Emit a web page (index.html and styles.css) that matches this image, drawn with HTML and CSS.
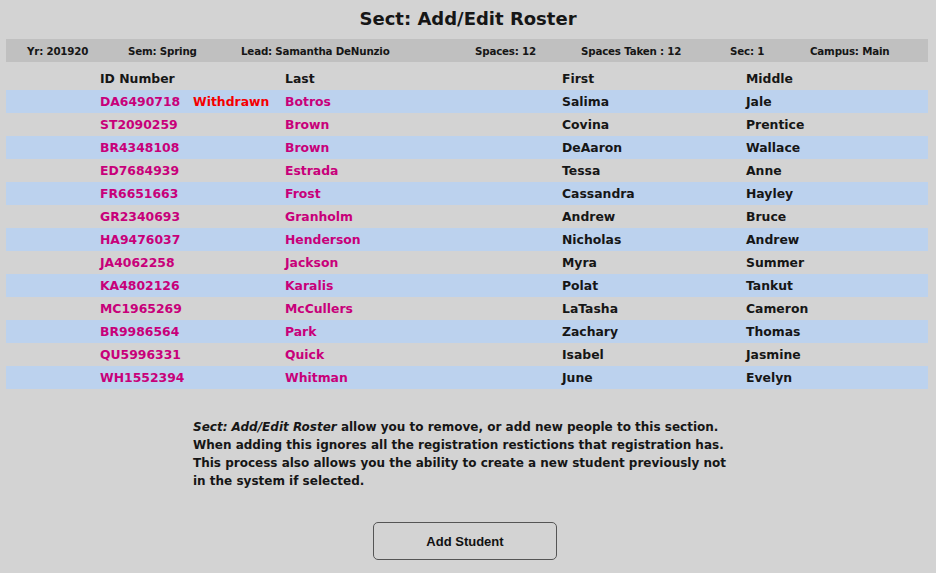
FILE: index.html
```html
<!DOCTYPE html>
<html>
<head>
<meta charset="utf-8">
<link rel="stylesheet" href="styles.css">
</head>
<body>
<div class="page">
  <h1 class="title">Sect: Add/Edit Roster</h1>
  <div class="infobar">
    <span>Yr: 201920</span>
    <span>Sem: Spring</span>
    <span>Lead: Samantha DeNunzio</span>
    <span>Spaces: 12</span>
    <span>Spaces Taken : 12</span>
    <span>Sec: 1</span>
    <span>Campus: Main</span>
  </div>
  <div class="roster">
    <div class="row head"><span>ID Number</span><span></span><span>Last</span><span>First</span><span>Middle</span></div>
    <div class="row alt"><span class="id">DA6490718</span><span class="wd">Withdrawn</span><span class="id">Botros</span><span>Salima</span><span>Jale</span></div>
    <div class="row"><span class="id">ST2090259</span><span></span><span class="id">Brown</span><span>Covina</span><span>Prentice</span></div>
    <div class="row alt"><span class="id">BR4348108</span><span></span><span class="id">Brown</span><span>DeAaron</span><span>Wallace</span></div>
    <div class="row"><span class="id">ED7684939</span><span></span><span class="id">Estrada</span><span>Tessa</span><span>Anne</span></div>
    <div class="row alt"><span class="id">FR6651663</span><span></span><span class="id">Frost</span><span>Cassandra</span><span>Hayley</span></div>
    <div class="row"><span class="id">GR2340693</span><span></span><span class="id">Granholm</span><span>Andrew</span><span>Bruce</span></div>
    <div class="row alt"><span class="id">HA9476037</span><span></span><span class="id">Henderson</span><span>Nicholas</span><span>Andrew</span></div>
    <div class="row"><span class="id">JA4062258</span><span></span><span class="id">Jackson</span><span>Myra</span><span>Summer</span></div>
    <div class="row alt"><span class="id">KA4802126</span><span></span><span class="id">Karalis</span><span>Polat</span><span>Tankut</span></div>
    <div class="row"><span class="id">MC1965269</span><span></span><span class="id">McCullers</span><span>LaTasha</span><span>Cameron</span></div>
    <div class="row alt"><span class="id">BR9986564</span><span></span><span class="id">Park</span><span>Zachary</span><span>Thomas</span></div>
    <div class="row"><span class="id">QU5996331</span><span></span><span class="id">Quick</span><span>Isabel</span><span>Jasmine</span></div>
    <div class="row alt"><span class="id">WH1552394</span><span></span><span class="id">Whitman</span><span>June</span><span>Evelyn</span></div>
  </div>
  <p class="note"><em>Sect: Add/Edit Roster</em> allow you to remove, or add new people to this section.<br>When adding this ignores all the registration restictions that registration has.<br>This process also allows you the ability to create a new student previously not<br>in the system if selected.</p>
  <div class="actions"><button class="btn">Add Student</button></div>
</div>
</body>
</html>
```
FILE: styles.css
```css
html, body {
  margin: 0;
  padding: 0;
  background: #d3d3d3;
}
body {
  font-family: "DejaVu Sans", sans-serif;
  font-weight: bold;
  color: #161616;
  width: 936px;
  height: 573px;
  overflow: hidden;
}
.page {
  padding: 0 8px 0 6px;
}
.title {
  margin: 0;
  height: 39px;
  line-height: 38px;
  font-size: 18px;
  text-align: center;
  padding-left: 2px;
}
.infobar {
  background: #c0c0c0;
  height: 23px;
  display: grid;
  grid-template-columns: 101px 113px 234px 106px 149px 80px 1fr;
  padding-left: 21px;
  align-items: center;
  font-size: 10.3px;
  letter-spacing: -0.2px;
}
.roster {
  padding-top: 5px;
}
.row {
  display: grid;
  grid-template-columns: 93px 92px 277px 184px 1fr;
  padding-left: 94px;
  height: 23px;
  align-items: center;
  font-size: 12.4px;
}
.row.alt {
  background: #bcd2ee;
}
.id {
  color: #c8007a;
}
.wd {
  color: #f50000;
}
.note {
  margin: 29px 0 0 187px;
  font-size: 12px;
  line-height: 18px;
}
.note em {
  font-style: italic;
}
.actions {
  display: flex;
  justify-content: center;
  margin-top: 32px;
  padding-right: 4px;
}
.btn {
  width: 184px;
  height: 38px;
  background: #d3d3d3;
  border: 1px solid #555;
  border-radius: 5px;
  font-family: "Liberation Sans", Arial, sans-serif;
  font-weight: bold;
  font-size: 13px;
  color: #111;
}
```
